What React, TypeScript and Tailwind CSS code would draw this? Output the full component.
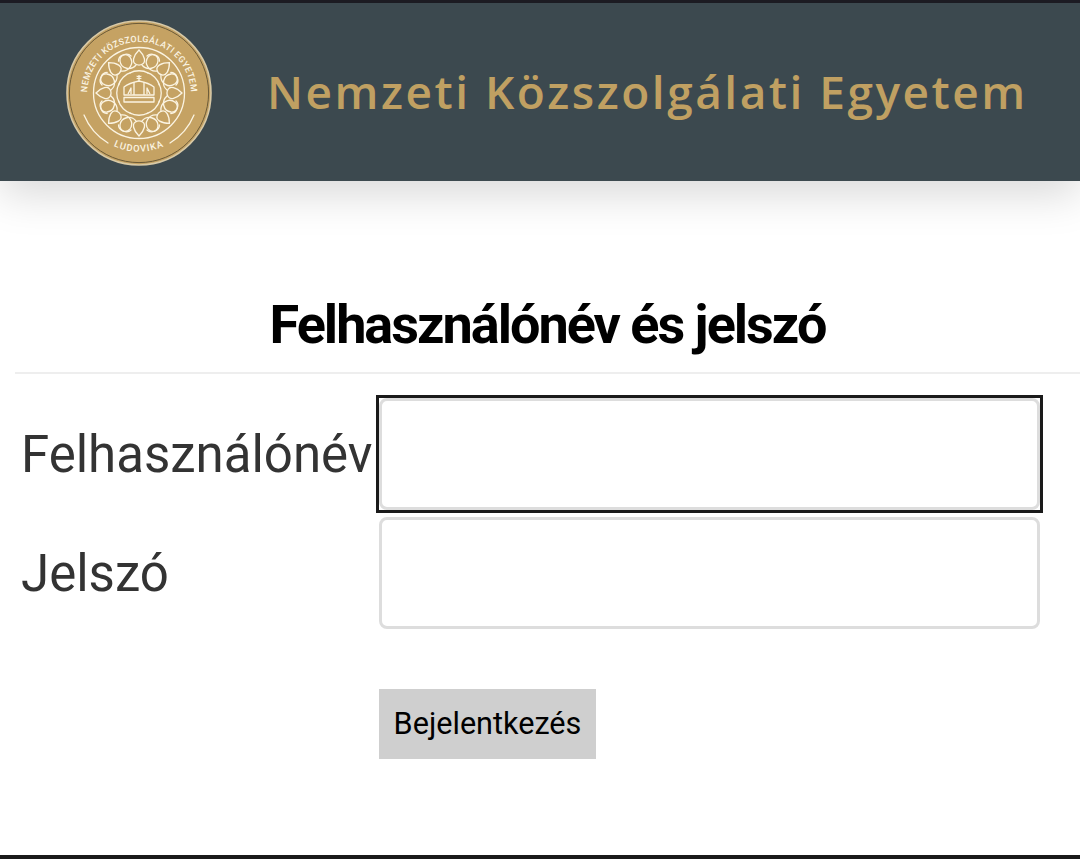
import React from 'react';

const petals = [0, 45, 90, 135, 180, 225, 270, 315];

// University seal: rings, curved lettering, knot ornament and crown
const Seal = () => (
  <svg width="146" height="146" viewBox="-73 -73 146 146" className="mt-[2px] flex-none">
    <defs>
      <path id="sealTop" d="M -46 29 A 54 54 0 1 1 46 29" transform="scale(0.96)" />
      <path id="sealBottom" d="M -36 46.5 A 59 59 0 0 0 36 46.5" />
    </defs>
    <circle r="72" fill="#c5a263" stroke="#d8c9a6" strokeWidth="1.6" />
    <circle r="69.6" fill="none" stroke="#6b5a38" strokeWidth="1" />
    <text fontFamily="Roboto, sans-serif" fontSize="8.9" fontWeight="500" fill="#fbf4e2" letterSpacing="0.35">
      <textPath href="#sealTop" startOffset="50%" textAnchor="middle">NEMZETI KÖZSZOLGÁLATI EGYETEM</textPath>
    </text>
    <text fontFamily="Roboto, sans-serif" fontSize="9.4" fontWeight="500" fill="#fbf4e2" letterSpacing="1">
      <textPath href="#sealBottom" startOffset="50%" textAnchor="middle">LUDOVIKA</textPath>
    </text>
    <g fill="none" stroke="#fbf4e2" strokeWidth="1.3" strokeLinecap="round">
      <path d="M -55 22 A 59 59 0 0 0 -31 50" />
      <path d="M 55 22 A 59 59 0 0 1 31 50" />
      <circle r="45.5" />
      {petals.map((deg) => (
        <g key={deg} transform={`rotate(${deg})`}>
          <path d="M 0 -43 C -6 -37 -7 -31 -3.5 -29 C -1 -27.5 1 -27.5 3.5 -29 C 7 -31 6 -37 0 -43 Z" />
          <path d="M -3 -28 C -8 -22 -18 -24 -19 -32 C -19.5 -38 -12 -41 -8 -37" />
          <path d="M 3 -28 C 8 -22 18 -24 19 -32 C 19.5 -38 12 -41 8 -37" />
          <path d="M -9 -20 C -4 -23 4 -23 9 -20" />
        </g>
      ))}
    </g>
    <g fill="none" stroke="#fbf4e2" strokeWidth="1.3" strokeLinejoin="round">
      <path d="M -15 2 L -15 -6 C -10 -10 -5 -11 0 -12 C 5 -11 10 -10 15 -6 L 15 2 Z" fill="#c5a263" />
      <path d="M -15 4.5 H 15 V 9 H -15 Z" />
      <path d="M -5 2 V -11 M 5 2 V -11 M -11 1 L -8 -5 L -8 1 M 11 1 L 8 -5 L 8 1" />
      <path d="M 0 -12 V -18 M -2.4 -17 L 2.4 -14.5 M 2.4 -17 L -2.4 -14.5" />
    </g>
  </svg>
);

const App: React.FC = () => {
  return (
    <div className="flex h-[859px] w-[1080px] flex-col overflow-hidden bg-white font-['Roboto',sans-serif]">
      <div className="h-[3px] flex-none bg-[#1d1c24]" />

      {/* Header */}
      <header className="z-10 flex h-[178px] flex-none items-center bg-[#3c494f] pl-[66px] shadow-[0_14px_40px_rgba(0,0,0,0.15)]">
        <Seal />
        <span className="mb-[2px] ml-[55px] whitespace-nowrap font-['Open_Sans',sans-serif] text-[46px] font-semibold leading-none tracking-[2.5px] text-[#c0a062]">
          Nemzeti Közszolgálati Egyetem
        </span>
      </header>

      {/* Login form */}
      <main className="flex flex-1 flex-col pl-[15px]">
        <h1 className="mt-[114px] text-center text-[54px] font-bold leading-[60px] tracking-[-2px] text-black">
          Felhasználónév és jelszó
        </h1>
        <div className="mt-[17px] h-[2px] bg-[#eeeeee]" />

        <div className="mt-[24px] flex flex-col gap-[6px] pl-[6px]">
          <div className="flex items-center">
            <label className="w-[358px] flex-none text-[51px] leading-none text-[#333333]">Felhasználónév</label>
            <div className="-my-[3px] -mx-[3px] border-[3px] border-[#1a1a1a]">
              <input className="block h-[112px] w-[661px] rounded-lg border-[3px] border-[#dddddd] bg-white outline-none" />
            </div>
          </div>
          <div className="mt-[1px] flex items-center">
            <label className="w-[358px] flex-none text-[51px] leading-none text-[#333333]">Jelszó</label>
            <input type="password" className="block h-[112px] w-[661px] rounded-lg border-[3px] border-[#dddddd] bg-white outline-none" />
          </div>
        </div>

        <button className="mt-[60px] ml-[364px] h-[70px] w-[217px] bg-[#cfcfcf] text-[30.6px] text-black">
          Bejelentkezés
        </button>
      </main>

      <div className="h-[4px] flex-none bg-[#1a1a1a]" />
    </div>
  );
};

export default App;
